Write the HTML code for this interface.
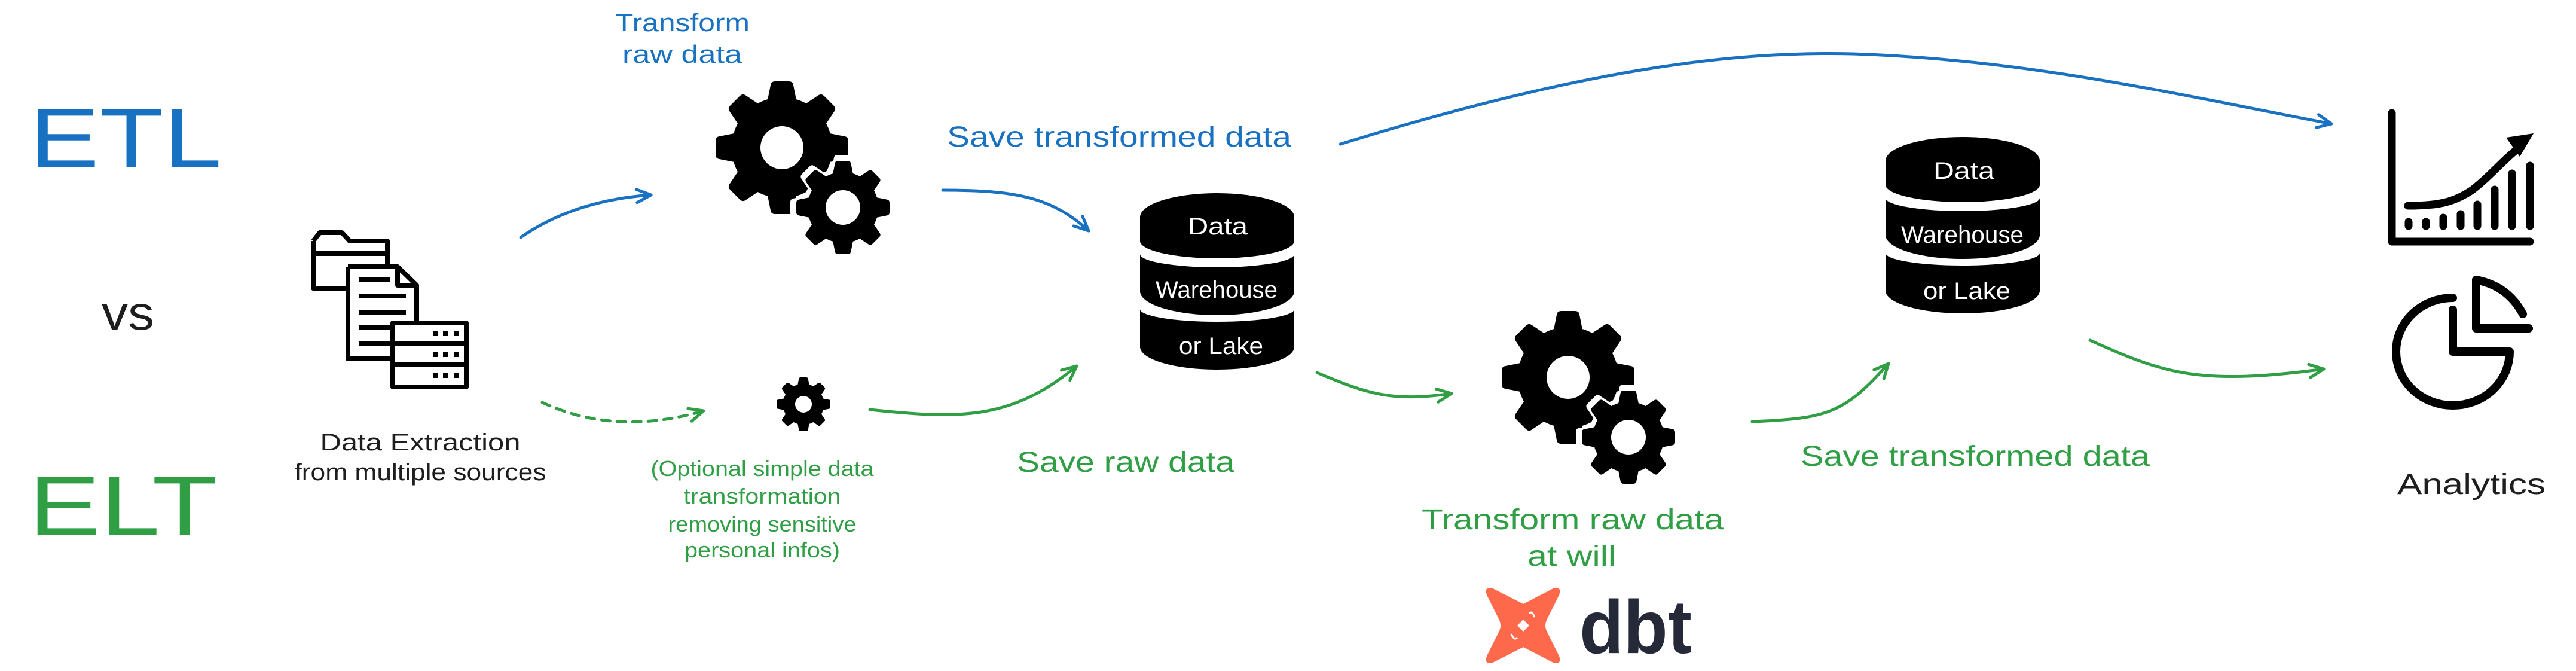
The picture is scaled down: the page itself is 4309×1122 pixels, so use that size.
<!DOCTYPE html>
<html><head><meta charset="utf-8"><style>
html,body{margin:0;padding:0;background:#fff;}
svg{display:block;}
text{font-family:"Liberation Sans",sans-serif;}
</style></head><body>
<svg width="4309" height="1122" viewBox="0 0 4309 1122" xmlns="http://www.w3.org/2000/svg">
<defs>
<symbol id="gear" viewBox="-1 -1 2 2" overflow="visible">
  <circle r="0.76"/>
  <g id="tooth"><path d="M-0.24,-0.6 L-0.17,-0.95 Q-0.16,-1 -0.1,-1 L0.1,-1 Q0.16,-1 0.17,-0.95 L0.24,-0.6 Z"/></g>
  <use href="#tooth" transform="rotate(45)"/><use href="#tooth" transform="rotate(90)"/>
  <use href="#tooth" transform="rotate(135)"/><use href="#tooth" transform="rotate(180)"/>
  <use href="#tooth" transform="rotate(225)"/><use href="#tooth" transform="rotate(270)"/>
  <use href="#tooth" transform="rotate(315)"/>
</symbol>
<marker id="ab" markerUnits="userSpaceOnUse" markerWidth="60" markerHeight="60" refX="0" refY="0" viewBox="-30 -30 60 60" orient="auto">
  <path d="M0,0 L-24,-11 M0,0 L-24,11" stroke="#1971c2" stroke-width="5" fill="none" stroke-linecap="round"/>
</marker>
<marker id="ag" markerUnits="userSpaceOnUse" markerWidth="60" markerHeight="60" refX="0" refY="0" viewBox="-30 -30 60 60" orient="auto">
  <path d="M0,0 L-24,-11 M0,0 L-24,11" stroke="#2f9e44" stroke-width="5" fill="none" stroke-linecap="round"/>
</marker>
</defs>

<!-- Left labels -->
<text x="49" y="279" font-size="140" fill="#1971c2" textLength="322" lengthAdjust="spacingAndGlyphs">ETL</text>
<text x="170" y="551" font-size="80" fill="#1e1e1e" textLength="88" lengthAdjust="spacingAndGlyphs">vs</text>
<text x="48" y="894" font-size="140" fill="#2f9e44" textLength="316" lengthAdjust="spacingAndGlyphs">ELT</text>

<!-- Files icon -->
<g fill="none" stroke="#000" stroke-width="8" stroke-linejoin="round">
  <path d="M524,403 L535,389 L572,389 L585,403 L648,403 L648,446 M582,482 L524,482 L524,403"/>
  <line x1="524" y1="424" x2="648" y2="424"/>
  <path d="M582,446 L665,446 L697,477 L697,540 M657,600 L582,600 Z M582,446 L582,600"/>
  <path d="M665,446 L665,477 L697,477"/>
  <line x1="600" y1="468" x2="652" y2="468"/>
  <line x1="600" y1="495" x2="679" y2="495"/>
  <line x1="600" y1="522" x2="679" y2="522"/>
  <line x1="600" y1="548" x2="657" y2="548"/>
  <line x1="600" y1="575" x2="657" y2="575"/>
  <rect x="657" y="540" width="123" height="107"/>
  <line x1="657" y1="575" x2="780" y2="575"/>
  <line x1="657" y1="610" x2="780" y2="610"/>
</g>
<g fill="#000">
  <rect x="724" y="554" width="8" height="8"/><rect x="741" y="554" width="8" height="8"/><rect x="759" y="554" width="8" height="8"/>
  <rect x="724" y="589" width="8" height="8"/><rect x="741" y="589" width="8" height="8"/><rect x="759" y="589" width="8" height="8"/>
  <rect x="724" y="624" width="8" height="8"/><rect x="741" y="624" width="8" height="8"/><rect x="759" y="624" width="8" height="8"/>
</g>
<text x="703" y="753" font-size="40" fill="#1e1e1e" text-anchor="middle" textLength="335" lengthAdjust="spacingAndGlyphs">Data Extraction</text>
<text x="703" y="803" font-size="40" fill="#1e1e1e" text-anchor="middle" textLength="421" lengthAdjust="spacingAndGlyphs">from multiple sources</text>

<!-- Transform raw data (blue) -->
<text x="1029" y="52" font-size="42" fill="#1971c2" textLength="225" lengthAdjust="spacingAndGlyphs">Transform</text>
<text x="1041" y="105" font-size="42" fill="#1971c2" textLength="200" lengthAdjust="spacingAndGlyphs">raw data</text>

<!-- Gears 1 -->
<use href="#gear" x="1197" y="136" width="222" height="222" fill="#000"/>
<circle cx="1308" cy="247" r="36" fill="#fff"/>
<use href="#gear" x="1322" y="259" width="176" height="176" fill="#fff"/>
<use href="#gear" x="1332" y="269" width="156" height="156" fill="#000"/>
<circle cx="1410" cy="347" r="29" fill="#fff"/>

<!-- tiny gear -->
<use href="#gear" x="1299" y="631" width="90" height="90" fill="#000"/>
<circle cx="1344" cy="676" r="14" fill="#fff"/>

<!-- Optional text -->
<g font-size="36" fill="#2f9e44" text-anchor="middle">
<text x="1275" y="796" textLength="373" lengthAdjust="spacingAndGlyphs">(Optional simple data</text>
<text x="1275" y="842" textLength="263" lengthAdjust="spacingAndGlyphs">transformation</text>
<text x="1275" y="889" textLength="315" lengthAdjust="spacingAndGlyphs">removing sensitive</text>
<text x="1275" y="932" textLength="260" lengthAdjust="spacingAndGlyphs">personal infos)</text>
</g>

<!-- Arrows -->
<g fill="none" stroke-width="5" stroke-linecap="round">
  <path d="M871,397 Q960,335 1089,326" stroke="#1971c2" marker-end="url(#ab)"/>
  <path d="M1577,318 C1700,318 1760,330 1821,386" stroke="#1971c2" marker-end="url(#ab)"/>
  <path d="M2242,241 C2650,115 2900,85 3100,90 C3400,100 3650,160 3900,207" stroke="#1971c2" marker-end="url(#ab)"/>
  <path d="M907,673 Q1030,730 1177,687" stroke="#2f9e44" stroke-dasharray="14,12" marker-end="url(#ag)"/>
  <path d="M1455,685 C1600,700 1690,705 1801,612" stroke="#2f9e44" marker-end="url(#ag)"/>
  <path d="M2203,623 C2290,660 2330,672 2428,658" stroke="#2f9e44" marker-end="url(#ag)"/>
  <path d="M2931,705 C3060,700 3085,690 3159,608" stroke="#2f9e44" marker-end="url(#ag)"/>
  <path d="M3496,569 C3620,625 3680,645 3887,617" stroke="#2f9e44" marker-end="url(#ag)"/>
</g>

<text x="1584" y="245" font-size="48" fill="#1971c2" textLength="576" lengthAdjust="spacingAndGlyphs">Save transformed data</text>
<text x="1701" y="789" font-size="48" fill="#2f9e44" textLength="364" lengthAdjust="spacingAndGlyphs">Save raw data</text>

<!-- DB1 -->
<g fill="#000">
<path d="M1907,363 A129,40 0 0 1 2165,363 V403 A129,29 0 0 1 1907,403 Z"/>
<path d="M1907,425 A129,22 0 0 0 2165,425 V487 A129,40 0 0 1 1907,487 Z"/>
<path d="M1907,517 A129,21 0 0 0 2165,517 V580 A129,38 0 0 1 1907,580 Z"/>
</g>
<g fill="#fff" font-size="40">
<text x="1987" y="392" textLength="100" lengthAdjust="spacingAndGlyphs">Data</text>
<text x="1933" y="498" textLength="204" lengthAdjust="spacingAndGlyphs">Warehouse</text>
<text x="1972" y="592" textLength="141" lengthAdjust="spacingAndGlyphs">or Lake</text>
</g>

<!-- Gears 2 -->
<use href="#gear" x="2512" y="520" width="222" height="222" fill="#000"/>
<circle cx="2623" cy="631" r="36" fill="#fff"/>
<use href="#gear" x="2636" y="643" width="176" height="176" fill="#fff"/>
<use href="#gear" x="2646" y="653" width="156" height="156" fill="#000"/>
<circle cx="2724" cy="731" r="29" fill="#fff"/>

<text x="2378" y="885" font-size="48" fill="#2f9e44" textLength="505" lengthAdjust="spacingAndGlyphs">Transform raw data</text>
<text x="2555" y="946" font-size="48" fill="#2f9e44" textLength="148" lengthAdjust="spacingAndGlyphs">at will</text>

<!-- dbt logo -->
<g transform="translate(2482,980)">
<path fill="#ff694b" d="M5,15 Q0,0 15,4 L66,30 L116,4 Q131,0 126,15 L106,55 Q100,66 106,77 L126,117 Q131,132 116,128 L66,102 L15,128 Q0,132 5,117 L25,77 Q31,66 25,55 Z"/>
<path fill="#fff" d="M66,56 L76,66 L66,76 L56,66 Z"/>
<path fill="none" stroke="#fff" stroke-width="3" d="M85,52 Q80,40 76,46 M46,80 Q51,92 56,86"/>
</g>
<text x="2642" y="1092" font-size="126" font-weight="bold" fill="#262a38" textLength="188" lengthAdjust="spacingAndGlyphs">dbt</text>

<!-- DB2 -->
<g fill="#000">
<path d="M3154,269 A129,40 0 0 1 3412,269 V309 A129,29 0 0 1 3154,309 Z"/>
<path d="M3154,331 A129,22 0 0 0 3412,331 V393 A129,40 0 0 1 3154,393 Z"/>
<path d="M3154,423 A129,21 0 0 0 3412,423 V486 A129,38 0 0 1 3154,486 Z"/>
</g>
<g fill="#fff" font-size="40">
<text x="3234" y="299" textLength="102" lengthAdjust="spacingAndGlyphs">Data</text>
<text x="3180" y="406" textLength="205" lengthAdjust="spacingAndGlyphs">Warehouse</text>
<text x="3217" y="500" textLength="146" lengthAdjust="spacingAndGlyphs">or Lake</text>
</g>
<text x="3012" y="779" font-size="48" fill="#2f9e44" textLength="584" lengthAdjust="spacingAndGlyphs">Save transformed data</text>

<!-- Chart icon -->
<g fill="none" stroke="#000" stroke-width="13" stroke-linecap="round" stroke-linejoin="round">
  <path d="M4001,189 V404 H4232"/>
  <path d="M4029,371 V378 M4058,371 V378 M4087,364 V378 M4116,358 V378 M4144,342 V378 M4173,317 V378 M4202,290 V378 M4232,277 V378"/>
  <path d="M4028,344 C4080,344 4105,338 4135,318 C4165,295 4185,270 4210,250"/>
</g>
<path d="M4192,230 L4238,223 L4215,262 Z" fill="#000"/>

<!-- Pie icon -->
<g fill="none" stroke="#000" stroke-width="14" stroke-linecap="round" stroke-linejoin="round">
  <path d="M4103,498 A95,90 0 1 0 4198,588 H4103 V518"/>
  <path d="M4142,468 V549 H4230 M4142,468 Q4195,478 4220,525"/>
</g>
<text x="4010" y="826" font-size="48" fill="#1e1e1e" textLength="248" lengthAdjust="spacingAndGlyphs">Analytics</text>
</svg>
</body></html>
